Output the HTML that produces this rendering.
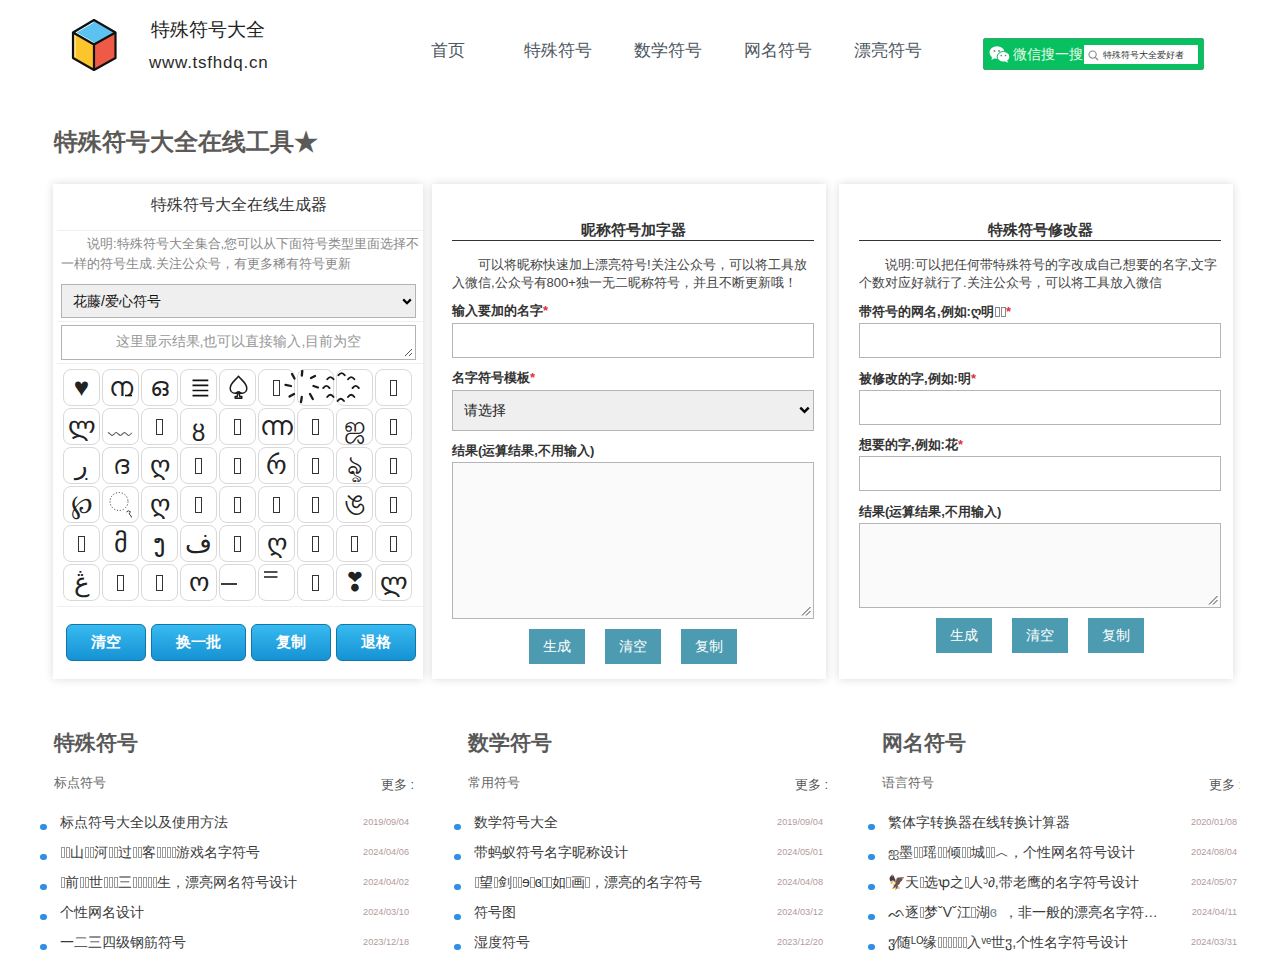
<!DOCTYPE html>
<html><head><meta charset="utf-8">
<style>
*{box-sizing:border-box}
html,body{margin:0;padding:0;background:#fff;width:1280px;height:960px;overflow:hidden;font-family:"Liberation Sans",sans-serif;color:#333}
.abs{position:absolute}
.logo-t1{left:151px;top:17px;font-size:19px;color:#222;line-height:26px;white-space:nowrap}
.logo-t2{left:149px;top:52px;font-size:17px;color:#2a2a2a;line-height:22px;white-space:nowrap;letter-spacing:0.75px}
.nav{top:40px;font-size:17px;color:#4d5661;line-height:22px;white-space:nowrap}
.wx{left:983px;top:38px;width:221px;height:32px;background:#07c160;border:1px solid #34ab6b;border-radius:2px}
.wx .t{position:absolute;left:29px;top:6.5px;font-size:13.6px;color:#e6fbe9;line-height:18px;white-space:nowrap}
.wx .box{position:absolute;left:100px;top:5.5px;width:114px;height:19.5px;background:#fff}
.wx .box span{position:absolute;left:19px;top:4px;font-size:8.8px;line-height:12px;color:#333;white-space:nowrap}
.h1{left:54px;top:126px;font-size:24px;font-weight:bold;color:#5c5a57;line-height:32px;white-space:nowrap}
.panel{top:184px;height:495px;background:#fff;box-shadow:0 0 9px rgba(0,0,0,0.15)}

.p1 .ttl{position:absolute;left:1px;width:370px;top:9px;text-align:center;font-size:16px;line-height:24px;color:#333}
.sep{position:absolute;left:4px;right:0;height:1px;background:#f0f0f0}
.p1 .desc{position:absolute;left:8px;top:50px;width:370px;font-size:13px;line-height:20px;color:#888;white-space:nowrap}
.sel{position:absolute;background:#efefef;border:1px solid #b3b3b3;font-size:14px;color:#111;white-space:nowrap}
.sel .chev{position:absolute;right:3px;top:12.5px}
.ta{position:absolute;background:#fff;border:1px solid #b3b3b3}
.cell{position:absolute;width:37px;height:37px;border:1px solid #d9d9d9;border-radius:8px;text-align:center;font-size:26px;line-height:35px;color:#222;overflow:visible}
.tofu{display:inline-block;width:7px;height:16px;border:1px solid #333;vertical-align:middle;margin-top:-3px}
.bb{position:absolute;top:440px;height:37px;border:1px solid #0e76a8;border-radius:6px;background:linear-gradient(#38baf0,#1592d4);color:#fff;font-weight:bold;font-size:15px;text-align:center;line-height:34px}

.fp .ttl{position:absolute;left:20px;width:362px;top:36px;height:21px;border-bottom:1px solid #333;text-align:center;font-size:15px;font-weight:bold;line-height:20px;color:#333;white-space:nowrap}
.fp .desc{position:absolute;left:20px;top:72px;font-size:13px;line-height:17.5px;color:#444;white-space:nowrap}
.fp .lb{position:absolute;left:20px;font-size:13px;font-weight:bold;line-height:18px;color:#333;white-space:nowrap}
.fp .lb b{color:#e03131}
.fp .in{position:absolute;left:20px;width:362px;height:35px;border:1px solid #b5b5b5;background:#fff}
.fp .sl{position:absolute;left:20px;width:362px;height:41px;border:1px solid #b5b5b5;background:#efefef;font-size:14px;line-height:39px;padding-left:11px;color:#222}
.fp .txa{position:absolute;left:20px;width:362px;border:1px solid #b5b5b5;background:#fafafa}
.fp .bt{position:absolute;width:56px;height:35px;background:#4c9bb0;color:#fff;font-size:14px;text-align:center;line-height:35px}
.tf2{display:inline-block;width:5px;height:10px;border:1px solid #888;margin-left:1px;vertical-align:-1px}
.rsz{position:absolute;right:2px;bottom:2px}

.col{position:absolute;top:700px;width:414px;height:260px}
.col h2{position:absolute;left:0;top:28px;margin:0;font-size:20.5px;font-weight:bold;line-height:30px;color:#595959;white-space:nowrap}
.col .sub{position:absolute;left:0;top:73.5px;font-size:13px;line-height:18px;color:#666;white-space:nowrap}
.col .more{position:absolute;left:327px;top:76px;font-size:13px;line-height:18px;color:#555;white-space:nowrap}
.col .li{position:absolute;left:6px;width:350px;height:30px;font-size:14px;line-height:20px;color:#3a3a3a;white-space:nowrap}
.col .li .tt{position:absolute;left:0;top:-1px;max-width:300px;overflow:hidden;text-overflow:ellipsis;white-space:nowrap}
.col .li .dt{position:absolute;right:1px;top:2.5px;font-size:9.2px;line-height:12px;color:#b39a9b}
.col .dot{position:absolute;left:-20px;top:10.5px;width:6.5px;height:6.5px;border-radius:50%;background:#2e8fe4}
.tf{display:inline-block;width:4.5px;height:11px;border:1px solid #9a9a9a;margin:0 0 0 0.5px;vertical-align:-1px}
</style></head><body>
<!-- logo -->
<svg class="abs" style="left:0;top:0" width="130" height="80" viewBox="0 0 130 80">
<polygon points="94,20 73,32.5 94,44.5 115.5,32.5" fill="#5cc3f1"/>
<polygon points="73,32.5 94,44.5 94,70 73,58" fill="#fcc52b"/>
<polygon points="94,44.5 115.5,32.5 115.5,58 94,70" fill="#ee5a45"/>
<path d="M93.5,22.3 L76,32.6 L93.5,42.6 M75,34.5 L75,57" fill="none" stroke="#fff" stroke-width="1" opacity="0.9"/>
<path d="M94,20 L73,32.5 L73,58 L94,70 L115.5,58 L115.5,32.5 Z M73,32.5 L94,44.5 L115.5,32.5 M94,44.5 L94,70" fill="none" stroke="#111" stroke-width="2.2" stroke-linejoin="round"/>
</svg>
<div class="abs logo-t1">特殊符号大全</div>
<div class="abs logo-t2">www.tsfhdq.cn</div>
<div class="abs nav" style="left:431px">首页</div>
<div class="abs nav" style="left:524px">特殊符号</div>
<div class="abs nav" style="left:634px">数学符号</div>
<div class="abs nav" style="left:744px">网名符号</div>
<div class="abs nav" style="left:854px">漂亮符号</div>
<div class="abs wx">
 <svg style="position:absolute;left:5px;top:7px" width="22" height="17" viewBox="0 0 22 17">
  <ellipse cx="8" cy="6.5" rx="7.5" ry="6.2" fill="#fff"/>
  <path d="M3,11 L2.5,14 L6,12 Z" fill="#fff"/>
  <ellipse cx="14.5" cy="10.8" rx="6.3" ry="5.3" fill="#fff" stroke="#07c160" stroke-width="1"/>
  <path d="M18,14.5 L19.5,16.8 L16,15.5 Z" fill="#fff"/>
  <circle cx="5.5" cy="5" r="0.9" fill="#6a8a78"/><circle cx="10" cy="5" r="0.9" fill="#6a8a78"/>
  <circle cx="12.3" cy="9.5" r="0.85" fill="#6a8a78"/><circle cx="16.5" cy="9.5" r="0.85" fill="#6a8a78"/>
 </svg>
 <div class="t">微信搜一搜</div>
 <div class="box">
  <svg style="position:absolute;left:4px;top:5px" width="11" height="11" viewBox="0 0 11 11"><circle cx="4.6" cy="4.6" r="3.6" fill="none" stroke="#888" stroke-width="1.1"/><path d="M7.3,7.3 L10,10" stroke="#888" stroke-width="1.2"/></svg>
  <span>特殊符号大全爱好者</span>
 </div>
</div>
<div class="abs h1">特殊符号大全在线工具★</div>


<div class="abs panel p1" style="left:53px;width:370px">
 <div class="ttl">特殊符号大全在线生成器</div>
 <div class="sep" style="top:46px"></div>
 <div class="desc"><span style="padding-left:26px"></span>说明:特殊符号大全集合,您可以从下面符号类型里面选择不<br>一样的符号生成.关注公众号，有更多稀有符号更新</div>
 <div class="sel" style="left:8px;top:100px;width:355px;height:34px;line-height:32px;padding-left:11px">花藤/爱心符号
  <svg class="chev" width="10" height="8" viewBox="0 0 10 8"><path d="M1.2,1.4 L5,5.2 L8.8,1.4" fill="none" stroke="#000" stroke-width="2.2"/></svg></div>
 <div class="sep" style="top:137px"></div>
 <div class="ta" style="left:8px;top:141px;width:355px;height:35px;text-align:center;font-size:14px;line-height:30px;color:#969696">这里显示结果,也可以直接输入,目前为空
  <svg style="position:absolute;right:2px;bottom:2px" width="9" height="9" viewBox="0 0 9 9"><path d="M1,8 L8,1 M5,8 L8,5" stroke="#555" stroke-width="1"/></svg></div>
 <div class="sep" style="top:179px"></div>
<div class="cell" style="left:10px;top:185px">♥</div>
<div class="cell" style="left:49px;top:185px">ന<svg style="position:absolute;left:22px;top:24px" width="8" height="3" viewBox="0 0 8 3"><path d="M0,1.5 H7" stroke="#111" stroke-width="1.6"/></svg></div>
<div class="cell" style="left:88px;top:185px">ഒ</div>
<div class="cell" style="left:127px;top:185px"><svg style="position:absolute;left:10.5px;top:8.5px" width="17" height="18" viewBox="0 0 17 18"><path d="M0.5,1.3 H16.3 M0.5,6.4 H16.3 M0.5,11.5 H16.3 M0.5,16.6 H16.3" stroke="#111" stroke-width="1.7"/></svg></div>
<div class="cell" style="left:166px;top:185px"><svg style="position:absolute;left:9px;top:5px" width="20" height="25" viewBox="0 0 20 25"><path d="M9.5,1.2 C6,5.5 1.2,8.5 1.2,13.2 C1.2,16.2 3.5,18.2 6,18.2 C7.4,18.2 8.4,17.6 9,16.8 L8.2,21.6 L6.2,21.6 L6.2,23.2 L12.8,23.2 L12.8,21.6 L10.8,21.6 L10,16.8 C10.6,17.6 11.6,18.2 13,18.2 C15.5,18.2 17.8,16.2 17.8,13.2 C17.8,8.5 13,5.5 9.5,1.2 Z" fill="none" stroke="#1a1a1a" stroke-width="1.5" stroke-linejoin="round"/></svg></div>
<div class="cell" style="left:205px;top:185px"><i class="tofu"></i></div>
<div class="cell" style="left:244px;top:185px"></div>
<div class="cell" style="left:283px;top:185px"></div>
<div class="cell" style="left:322px;top:185px"><i class="tofu"></i></div>
<div class="cell" style="left:10px;top:224px">ლ</div>
<div class="cell" style="left:49px;top:224px">﹏</div>
<div class="cell" style="left:88px;top:224px"><i class="tofu"></i></div>
<div class="cell" style="left:127px;top:224px;font-size:24px;line-height:48px">ȣ</div>
<div class="cell" style="left:166px;top:224px"><i class="tofu"></i></div>
<div class="cell" style="left:205px;top:224px">ന്ന</div>
<div class="cell" style="left:244px;top:224px"><i class="tofu"></i></div>
<div class="cell" style="left:283px;top:224px">ஜ</div>
<div class="cell" style="left:322px;top:224px"><i class="tofu"></i></div>
<div class="cell" style="left:10px;top:263px">ڔ</div>
<div class="cell" style="left:49px;top:263px">ദ</div>
<div class="cell" style="left:88px;top:263px">ღ</div>
<div class="cell" style="left:127px;top:263px"><i class="tofu"></i></div>
<div class="cell" style="left:166px;top:263px"><i class="tofu"></i></div>
<div class="cell" style="left:205px;top:263px">რ</div>
<div class="cell" style="left:244px;top:263px"><i class="tofu"></i></div>
<div class="cell" style="left:283px;top:263px">ৡ</div>
<div class="cell" style="left:322px;top:263px"><i class="tofu"></i></div>
<div class="cell" style="left:10px;top:302px">℘</div>
<div class="cell" style="left:49px;top:302px"><svg style="position:absolute;left:5px;top:4px" width="28" height="28" viewBox="0 0 28 28"><circle cx="11" cy="10.5" r="9" fill="none" stroke="#444" stroke-width="1" stroke-dasharray="1.2 1.8"/><path d="M18.5,21 q2,-2.5 4,0 q-2,1 -1,2.5 q2,1 2,3" fill="none" stroke="#333" stroke-width="1"/></svg></div>
<div class="cell" style="left:88px;top:302px">ღ</div>
<div class="cell" style="left:127px;top:302px"><i class="tofu"></i></div>
<div class="cell" style="left:166px;top:302px"><i class="tofu"></i></div>
<div class="cell" style="left:205px;top:302px"><i class="tofu"></i></div>
<div class="cell" style="left:244px;top:302px"><i class="tofu"></i></div>
<div class="cell" style="left:283px;top:302px;font-size:30px">ঙ</div>
<div class="cell" style="left:322px;top:302px"><i class="tofu"></i></div>
<div class="cell" style="left:10px;top:341px"><i class="tofu"></i></div>
<div class="cell" style="left:49px;top:341px">მ</div>
<div class="cell" style="left:88px;top:341px">ງ</div>
<div class="cell" style="left:127px;top:341px">ف</div>
<div class="cell" style="left:166px;top:341px"><i class="tofu"></i></div>
<div class="cell" style="left:205px;top:341px">ღ</div>
<div class="cell" style="left:244px;top:341px"><i class="tofu"></i></div>
<div class="cell" style="left:283px;top:341px"><i class="tofu"></i></div>
<div class="cell" style="left:322px;top:341px"><i class="tofu"></i></div>
<div class="cell" style="left:10px;top:380px">ڠ</div>
<div class="cell" style="left:49px;top:380px"><i class="tofu"></i></div>
<div class="cell" style="left:88px;top:380px"><i class="tofu"></i></div>
<div class="cell" style="left:127px;top:380px">ო</div>
<div class="cell" style="left:166px;top:380px"><svg style="position:absolute;left:0px;top:17px" width="20" height="4" viewBox="0 0 20 4"><path d="M1,2 H17" stroke="#1a1a1a" stroke-width="1.7"/></svg></div>
<div class="cell" style="left:205px;top:380px"><svg style="position:absolute;left:4px;top:5px" width="16" height="9" viewBox="0 0 16 9"><path d="M1,2 H14.5 M1,7 H14.5" stroke="#1a1a1a" stroke-width="1.6"/></svg></div>
<div class="cell" style="left:244px;top:380px"><i class="tofu"></i></div>
<div class="cell" style="left:283px;top:380px">❣</div>
<div class="cell" style="left:322px;top:380px">ლ</div>
 <div class="sep" style="top:422px"></div>
 <div class="bb" style="left:13px;width:80px">清空</div>
 <div class="bb" style="left:98px;width:95px">换一批</div>
 <div class="bb" style="left:198px;width:80px">复制</div>
 <div class="bb" style="left:283px;width:80px">退格</div>
</div>


<div class="abs panel fp" style="left:432px;width:394px">
 <div class="ttl">昵称符号加字器</div>
 <div class="desc"><span style="padding-left:26px"></span>可以将昵称快速加上漂亮符号!关注公众号，可以将工具放<br>入微信,公众号有800+独一无二昵称符号，并且不断更新哦！</div>
 <div class="lb" style="top:118px">输入要加的名字<b>*</b></div>
 <div class="in" style="top:139px"></div>
 <div class="lb" style="top:185px">名字符号模板<b>*</b></div>
 <div class="sl" style="top:206px">请选择<svg style="position:absolute;right:3px;top:15px" width="11" height="8" viewBox="0 0 11 8"><path d="M1.3,1.6 L5.5,5.8 L9.7,1.6" fill="none" stroke="#000" stroke-width="2.4"/></svg></div>
 <div class="lb" style="top:258px">结果(运算结果,不用输入)</div>
 <div class="txa" style="top:278px;height:157px"><svg class="rsz" width="10" height="10" viewBox="0 0 10 10"><path d="M1,9.5 L9.5,1 M5,9.5 L9.5,5" stroke="#444" stroke-width="1"/></svg></div>
 <div class="bt" style="left:97px;top:445px">生成</div>
 <div class="bt" style="left:173px;top:445px">清空</div>
 <div class="bt" style="left:249px;top:445px">复制</div>
</div>


<div class="abs panel fp" style="left:839px;width:394px">
 <div class="ttl">特殊符号修改器</div>
 <div class="desc"><span style="padding-left:26px"></span>说明:可以把任何带特殊符号的字改成自己想要的名字,文字<br>个数对应好就行了.关注公众号，可以将工具放入微信</div>
 <div class="lb" style="top:119px">带符号的网名,例如:ღ明<i class="tf2"></i><i class="tf2"></i><b>*</b></div>
 <div class="in" style="top:139px"></div>
 <div class="lb" style="top:186px">被修改的字,例如:明<b>*</b></div>
 <div class="in" style="top:206px"></div>
 <div class="lb" style="top:252px">想要的字,例如:花<b>*</b></div>
 <div class="in" style="top:272px"></div>
 <div class="lb" style="top:319px">结果(运算结果,不用输入)</div>
 <div class="txa" style="top:339px;height:85px"><svg class="rsz" width="10" height="10" viewBox="0 0 10 10"><path d="M1,9.5 L9.5,1 M5,9.5 L9.5,5" stroke="#444" stroke-width="1"/></svg></div>
 <div class="bt" style="left:97px;top:434px">生成</div>
 <div class="bt" style="left:173px;top:434px">清空</div>
 <div class="bt" style="left:249px;top:434px">复制</div>
</div>


<div class="col" style="left:54px">
 <h2>特殊符号</h2>
 <div class="sub">标点符号</div>
 <div class="more">更多 :</div>
 <div class="li" style="top:113px"><i class="dot"></i><span class="tt">标点符号大全以及使用方法</span><span class="dt">2019/09/04</span></div>
 <div class="li" style="top:143px"><i class="dot"></i><span class="tt"><i class="tf"></i><i class="tf"></i>山<i class="tf"></i><i class="tf"></i>河<i class="tf"></i><i class="tf"></i>过<i class="tf"></i><i class="tf"></i>客<i class="tf"></i><i class="tf"></i><i class="tf"></i><i class="tf"></i>游戏名字符号</span><span class="dt">2024/04/06</span></div>
 <div class="li" style="top:173px"><i class="dot"></i><span class="tt"><i class="tf"></i>前<i class="tf"></i><i class="tf"></i>世<i class="tf"></i><i class="tf"></i><i class="tf"></i>三<i class="tf"></i><i class="tf"></i><i class="tf"></i><i class="tf"></i><i class="tf"></i>生，漂亮网名符号设计</span><span class="dt">2024/04/02</span></div>
 <div class="li" style="top:203px"><i class="dot"></i><span class="tt">个性网名设计</span><span class="dt">2024/03/10</span></div>
 <div class="li" style="top:233px"><i class="dot"></i><span class="tt">一二三四级钢筋符号</span><span class="dt">2023/12/18</span></div>
</div>
<div class="col" style="left:468px">
 <h2>数学符号</h2>
 <div class="sub">常用符号</div>
 <div class="more">更多 :</div>
 <div class="li" style="top:113px"><i class="dot"></i><span class="tt">数学符号大全</span><span class="dt">2019/09/04</span></div>
 <div class="li" style="top:143px"><i class="dot"></i><span class="tt">带蚂蚁符号名字昵称设计</span><span class="dt">2024/05/01</span></div>
 <div class="li" style="top:173px"><i class="dot"></i><span class="tt"><i class="tf"></i>望<i class="tf"></i>剑<i class="tf"></i><i class="tf"></i>ɘ<i class="tf"></i>ɞ<i class="tf"></i><i class="tf"></i>如<i class="tf"></i>画<i class="tf"></i>，漂亮的名字符号</span><span class="dt">2024/04/08</span></div>
 <div class="li" style="top:203px"><i class="dot"></i><span class="tt">符号图</span><span class="dt">2024/03/12</span></div>
 <div class="li" style="top:233px"><i class="dot"></i><span class="tt">湿度符号</span><span class="dt">2023/12/20</span></div>
</div>
<div class="col" style="left:882px">
 <h2>网名符号</h2>
 <div class="sub">语言符号</div>
 <div class="more" style="width:31px;overflow:hidden">更多 :</div>
 <div class="li" style="top:113px"><i class="dot"></i><span class="tt">繁体字转换器在线转换计算器</span><span class="dt">2020/01/08</span></div>
 <div class="li" style="top:143px"><i class="dot"></i><span class="tt">ஐ墨<i class="tf"></i><i class="tf"></i>瑶<i class="tf"></i><i class="tf"></i>倾<i class="tf"></i><i class="tf"></i>城<i class="tf"></i><i class="tf"></i>︿，个性网名符号设计</span><span class="dt">2024/08/04</span></div>
 <div class="li" style="top:173px"><i class="dot"></i><span class="tt">🦅天<i class="tf"></i>选ꝕ之<i class="tf"></i>人ᵓ∂,带老鹰的名字符号设计</span><span class="dt">2024/05/07</span></div>
 <div class="li" style="top:203px"><i class="dot"></i><span class="tt">ᨒ逐<i class="tf"></i>梦ˇVˇ江<i class="tf"></i>湖<span style="display:inline-block;width:14px;color:#7a8a95">ɞ</span>，非一般的漂亮名字符…</span><span class="dt">2024/04/11</span></div>
 <div class="li" style="top:233px"><i class="dot"></i><span class="tt">ჳ⁄随ᴸᴼ缘<i class="tf"></i><i class="tf"></i><i class="tf"></i><i class="tf"></i><i class="tf"></i><i class="tf"></i>入ᵛᵉ世ჳ,个性名字符号设计</span><span class="dt">2024/03/31</span></div>
</div>
<svg class="abs" style="left:0;top:0;pointer-events:none" width="420" height="420" viewBox="0 0 420 420"><path d="M302.3,371 L301.8,375.5 M292,374 L294.5,378.5 M311,378 L315,376 M285.5,384.8 L291,386 M313.5,386 L318,387.5 M289.5,396.5 L294,394 M310,394 L312.8,399 M301.8,397 L301,402 " stroke="#1a1a1a" stroke-width="2.3" stroke-linecap="round" fill="none"/><path d="M338.40000000000003,375.3 Q341.6,370.9 344.8,375.3 M327.2,379.3 Q330.4,374.9 333.59999999999997,379.3 M323.2,388.1 Q326.4,383.7 329.59999999999997,388.1 M327.2,397.0 Q330.4,392.59999999999997 333.59999999999997,397.0 M348.0,379.3 Q351.2,374.9 354.4,379.3 M352.5,388.1 Q355.7,383.7 358.9,388.1 M348.0,397.0 Q351.2,392.59999999999997 354.4,397.0 M337.6,401.0 Q340.8,396.59999999999997 344.0,401.0 " stroke="#1a1a1a" stroke-width="1.9" fill="none" stroke-linecap="round"/></svg>
</body></html>
